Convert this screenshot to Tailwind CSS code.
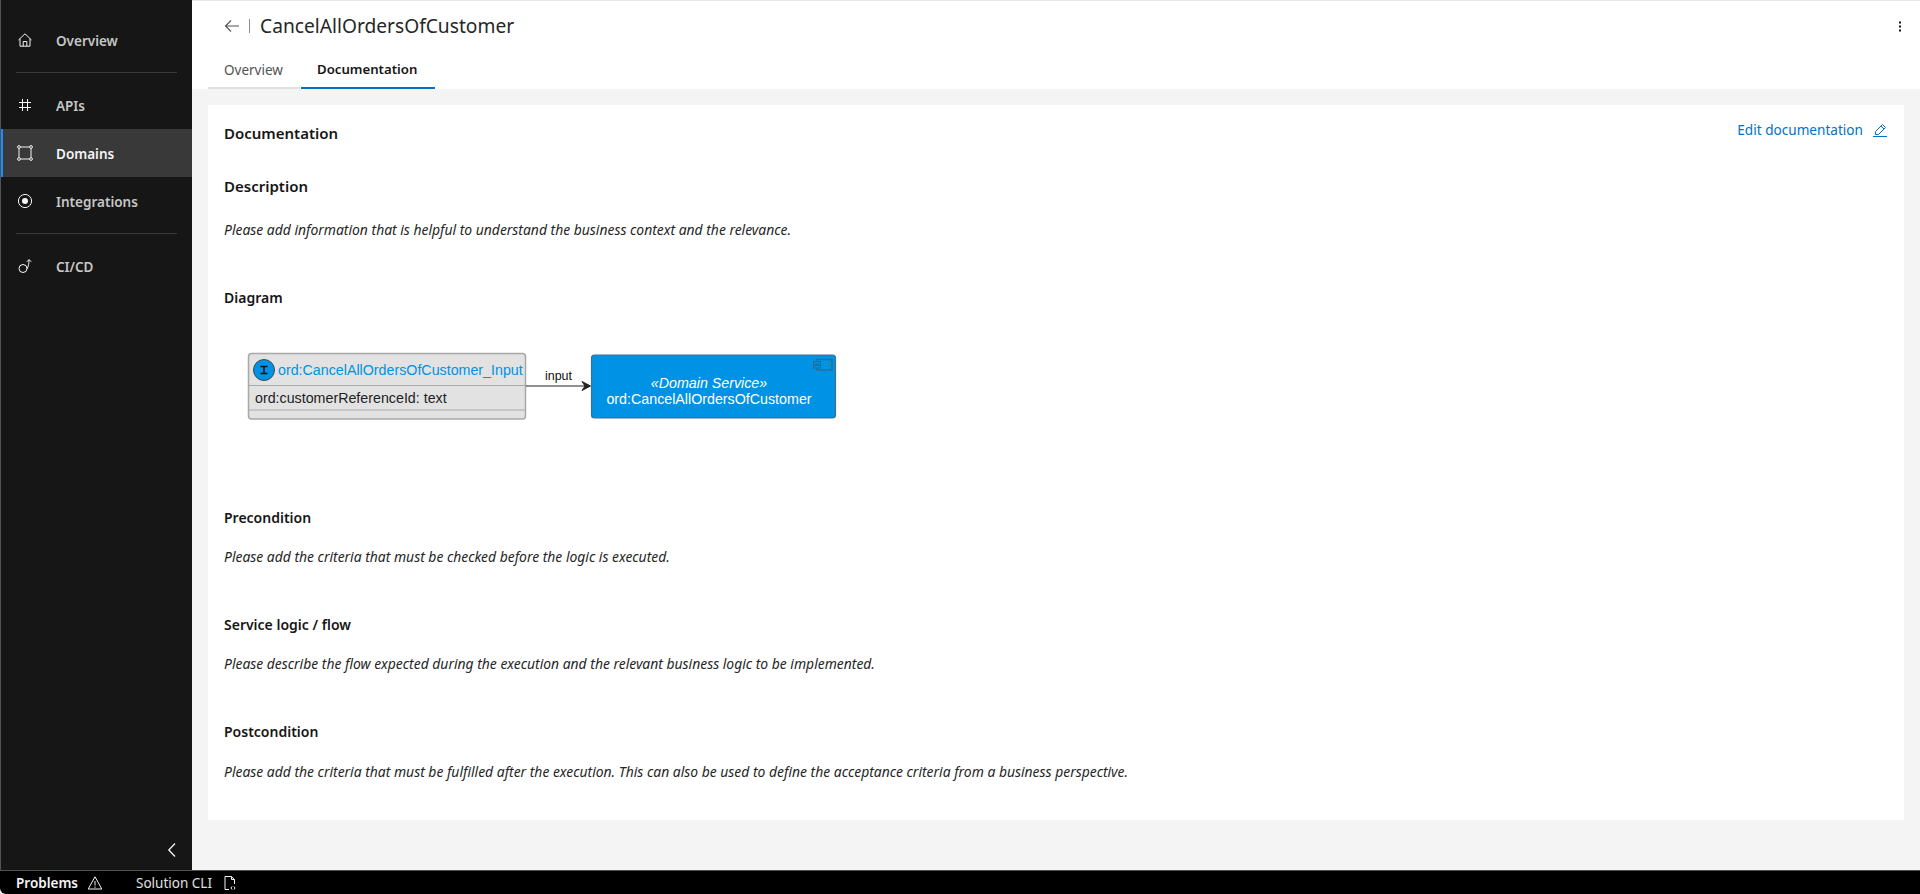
<!DOCTYPE html>
<html lang="en">
<head>
  <meta charset="UTF-8" />
  <title>CancelAllOrdersOfCustomer</title>
  <script src="https://cdn.jsdelivr.net/npm/@tailwindcss/browser@4"></script>
</head>
<body class="h-[894px] w-[1920px] overflow-hidden bg-[#f4f4f4] font-['Noto_Sans',sans-serif] text-[#161616]">
  <div class="flex h-[870px]">
    <!-- side nav -->
    <aside class="flex w-[192px] shrink-0 flex-col border-l-[1px] border-[#525252] bg-[#161616] text-[13.5px] font-semibold text-[#c6c6c6]">
      <div class="flex h-[48px] mt-[16px] items-center gap-[23px] pl-[16px]">
        <svg class="h-[16px] w-[16px]" viewBox="0 0 16 16" fill="none" stroke="#f4f4f4" stroke-width="1"><path d="M1.500 8 8 1.800 14.500 8M3 6.800V14.200H13V6.800M6.200 14.200V9.500H9.800V14.200"/></svg>
        <span class="mt-[2px]">Overview</span>
      </div>
      <div class="mx-[15px] mt-[8px] h-px bg-[#393939]"></div>
      <div class="flex h-[48px] mt-[8px] items-center gap-[23px] pl-[16px]">
        <svg class="h-[16px] w-[16px]" viewBox="0 0 16 16" fill="none" stroke="#f4f4f4" stroke-width="1"><path d="M5.500 2V14M10.500 2V14M2 5.500H14M2 10.500H14"/></svg>
        <span class="mt-[2px]">APIs</span>
      </div>
      <div class="flex h-[48px] items-center gap-[23px] border-l-[2px] border-[#1a8cff] bg-[#393939] pl-[14px] text-[#f4f4f4]">
        <svg class="h-[16px] w-[16px]" viewBox="0 0 16 16" fill="none" stroke="#f4f4f4" stroke-width="1"><path d="M3.500 2H12.500M3.500 14H12.500M2 3.500V12.500M14 3.500V12.500"/><circle cx="2" cy="2" r="1.400"/><circle cx="14" cy="2" r="1.400"/><circle cx="2" cy="14" r="1.400"/><circle cx="14" cy="14" r="1.400"/></svg>
        <span class="mt-[2px]">Domains</span>
      </div>
      <div class="flex h-[48px] items-center gap-[23px] pl-[16px]">
        <svg class="h-[16px] w-[16px]" viewBox="0 0 16 16" fill="none" stroke="#f4f4f4" stroke-width="1"><circle cx="8" cy="8" r="6.600"/><circle cx="8" cy="8" r="3" fill="#f4f4f4" stroke="none"/></svg>
        <span class="mt-[2px]">Integrations</span>
      </div>
      <div class="mx-[15px] mt-[8px] h-px bg-[#393939]"></div>
      <div class="flex h-[48px] mt-[8px] items-center gap-[23px] pl-[16px]">
        <svg class="h-[16px] w-[16px]" viewBox="0 0 16 16" fill="none" stroke="#f4f4f4" stroke-width="1"><circle cx="6" cy="10.500" r="4"/><path d="M10 11C11.500 8.500 12 5 12 2M9.800 3.800 12 1.500 14.200 3.800"/></svg>
        <span class="mt-[2px]">CI/CD</span>
      </div>
      <div class="mt-auto flex h-[40px] items-center justify-end pr-[12px]">
        <svg class="h-[16px] w-[16px]" viewBox="0 0 16 16" fill="none" stroke="#f4f4f4" stroke-width="1.300"><path d="M11 1.500 4.800 8 11 14.500"/></svg>
      </div>
    </aside>

    <main class="min-w-0 flex-1">
      <header class="h-[89px] border-t-[1px] border-[#e8e8e8] bg-white">
        <div class="flex h-[50px] items-center pl-[32px] pr-[12px]">
          <svg class="h-[16px] w-[16px]" viewBox="0 0 16 16" fill="none" stroke="#525252" stroke-width="1.100"><path d="M1.500 8H15M7 2.500 1.500 8 7 13.500"/></svg>
          <div class="ml-[9px] mr-[10px] h-[14px] w-px bg-[#8d8d8d]"></div>
          <h1 class="text-[19.200px] font-normal text-[#262626]">CancelAllOrdersOfCustomer</h1>
          <svg class="ml-auto h-[16px] w-[16px]" viewBox="0 0 16 16" fill="#161616"><rect x="7" y="3.500" width="2" height="2"/><rect x="7" y="7.500" width="2" height="2"/><rect x="7" y="11.500" width="2" height="2"/></svg>
        </div>
        <nav class="flex pl-[16px]">
          <div class="flex h-[38px] w-[92px] items-center border-b-[2px] border-[#e0e0e0] pl-[16px] pt-[2px] text-[13.500px] text-[#525252]">Overview</div>
          <div class="ml-[1px] flex h-[38px] w-[134px] items-center border-b-[2px] border-[#0072c3] pl-[16px] pt-[2px] text-[13.200px] font-semibold">Documentation</div>
        </nav>
      </header>

      <section class="relative mx-[16px] mt-[16px] h-[715px] bg-white pl-[16px]">
        <a class="absolute right-[16px] top-[15px] flex items-center gap-[9px] text-[13.600px] text-[#0072c3]">
          Edit documentation
          <svg class="h-[16px] w-[16px]" viewBox="0 0 16 16" fill="none" stroke="#0072c3" stroke-width="1"><path d="M1 14.500H15M3.500 12.500V9.500L10.500 2.500 13.500 5.500 6.500 12.500ZM9 4 12 7"/></svg>
        </a>
        <h2 class="pt-[16px] text-[15px] font-semibold leading-[24px]">Documentation</h2>
        <h3 class="mt-[29px] text-[15px] font-semibold leading-[24px]">Description</h3>
        <p class="mt-[22px] text-[13.900px] italic leading-[20px] text-[#262626]">Please add information that is helpful to understand the business context and the relevance.</p>
        <h4 class="mt-[48px] text-[14px] font-semibold leading-[20px]">Diagram</h4>

        <svg class="mt-[19px] block" width="640" height="170" viewBox="224 327 640 170" font-family="'Liberation Sans',sans-serif">
          <rect x="248.500" y="353.500" width="277" height="65.500" rx="3" fill="#e2e2e2" stroke="#a8a8a8" stroke-width="1.500"/>
          <path d="M248 385.500H526M248 410H526" stroke="#a8a8a8" stroke-width="1.200"/>
          <circle cx="264" cy="370" r="10.500" fill="#0092e4" stroke="#3a4a55"/>
          <path d="M260.500 366.500H267.500M260.500 373.500H267.500M264 366.500V373.500" stroke="#111" stroke-width="1.500" fill="none"/>
          <text x="278" y="375" font-size="14.250" fill="#0092e4">ord:CancelAllOrdersOfCustomer_Input</text>
          <text x="255" y="403" font-size="14.250" fill="#222">ord:customerReferenceId: text</text>
          <path d="M526 386H590" stroke="#222" stroke-width="1.200" fill="none"/>
          <path d="M582 381.500 590.500 386 582 390.500 585 386Z" stroke="#222" stroke-width="1" fill="#222"/>
          <text x="558.500" y="380" font-size="12.500" text-anchor="middle" fill="#111">input</text>
          <rect x="591.500" y="355" width="244" height="63" rx="3" fill="#0092e4" stroke="#3f6f92" stroke-width="1.200"/>
          <rect x="817" y="359.500" width="15" height="10.500" fill="none" stroke="#33668a" stroke-width="1.200"/>
          <rect x="813.500" y="361.500" width="7" height="2.500" fill="#0092e4" stroke="#33668a"/>
          <rect x="813.500" y="365.500" width="7" height="2.500" fill="#0092e4" stroke="#33668a"/>
          <text x="709" y="388" font-size="14.250" font-style="italic" text-anchor="middle" fill="#fff">«Domain Service»</text>
          <text x="709" y="404" font-size="14.250" text-anchor="middle" fill="#fff">ord:CancelAllOrdersOfCustomer</text>
        </svg>

        <h4 class="mt-[11px] text-[14px] font-semibold leading-[20px]">Precondition</h4>
        <p class="mt-[19px] text-[13.900px] italic leading-[20px] text-[#262626]">Please add the criteria that must be checked before the logic is executed.</p>
        <h4 class="mt-[48px] text-[14px] font-semibold leading-[20px]">Service logic / flow</h4>
        <p class="mt-[19px] text-[13.900px] italic leading-[20px] text-[#262626]">Please describe the flow expected during the execution and the relevant business logic to be implemented.</p>
        <h4 class="mt-[48px] text-[14px] font-semibold leading-[20px]">Postcondition</h4>
        <p class="mt-[20px] text-[13.900px] italic leading-[20px] text-[#262626]">Please add the criteria that must be fulfilled after the execution. This can also be used to define the acceptance criteria from a business perspective.</p>
      </section>
    </main>
  </div>

  <footer class="flex h-[24px] items-center rounded-bl-[6px] border-t-[1px] border-[#525252] bg-black pl-[16px] text-[13.500px] text-[#e0e0e0]">
    <span class="mt-[2px] font-semibold text-[#f4f4f4]">Problems</span>
    <svg class="ml-[9px] h-[16px] w-[16px]" viewBox="0 0 16 16" fill="none" stroke="#f4f4f4" stroke-width="1"><path d="M8 1.800 14.800 14H1.200ZM8 6V10.500M8 11.500V12.800"/></svg>
    <span class="ml-[33px] mt-[2px]">Solution CLI</span>
    <svg class="ml-[10px] h-[16px] w-[16px]" viewBox="0 0 16 16" fill="none" stroke="#f4f4f4" stroke-width="1"><path d="M7 14.500H3V1.500H9.500L12.500 4.500V9M9.500 1.500V4.500H12.500M10 11.500 9 13 10 14.500M12 11.500 13 13 12 14.500"/></svg>
  </footer>
</body>
</html>
